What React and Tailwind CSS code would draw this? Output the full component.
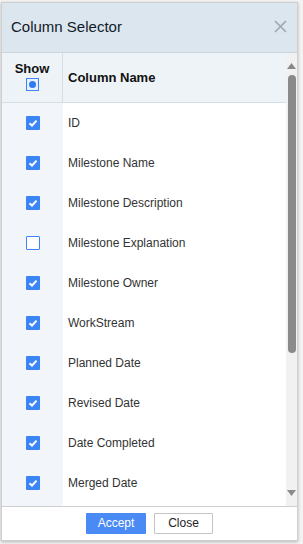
import React from "react";

const rows = [
  ["ID", true],
  ["Milestone Name", true],
  ["Milestone Description", true],
  ["Milestone Explanation", false],
  ["Milestone Owner", true],
  ["WorkStream", true],
  ["Planned Date", true],
  ["Revised Date", true],
  ["Date Completed", true],
  ["Merged Date", true],
  ["Status", true],
];

function Check({ on }) {
  if (!on)
    return <div className="w-[14px] h-[14px] border-[1.5px] border-[#3d84f6] bg-white rounded-[1px]" />;
  return (
    <div className="w-[14px] h-[14px] bg-[#3d84f6] rounded-[1px] flex items-center justify-center">
      <svg width="10" height="10" viewBox="0 0 10 10">
        <path d="M1.5 5.2 L4 7.5 L8.6 2.6" fill="none" stroke="white" strokeWidth="2" />
      </svg>
    </div>
  );
}

export default function App() {
  return (
    <div className="relative w-[303px] h-[544px] overflow-hidden bg-[#f3f3f3]" style={{ fontFamily: '"Liberation Sans", Arial, sans-serif' }}>
      <div className="absolute left-[1px] top-[2px] w-[297px] h-[539px] bg-white border border-[#cfcfcf] shadow-[0_1px_3px_rgba(0,0,0,0.25)] flex flex-col">
        <div className="h-[50px] shrink-0 bg-[#dce6ef] border-b border-[#cbd5de] flex items-center justify-between pl-[9px] pr-[10px]">
          <span className="text-[15px] text-[#111a28]">Column Selector</span>
          <svg width="13" height="13" viewBox="0 0 13 13" className="mt-[-2px]">
            <path d="M1 1 L12 12 M12 1 L1 12" stroke="#9ea6ae" strokeWidth="1.6" />
          </svg>
        </div>
        <div className="flex-1 flex min-h-0">
          <div className="flex-1 flex flex-col min-w-0 overflow-hidden">
            <div className="h-[50px] shrink-0 flex bg-[#eef3f8] border-b border-[#d5dde5]">
              <div className="w-[61px] shrink-0 border-r border-[#d5dde5] flex flex-col items-center pt-[8px]">
                <span className="text-[13px] font-bold text-[#111] leading-[15px]">Show</span>
                <div className="mt-[2px] w-[13px] h-[13px] border-[1.5px] border-[#3d84f6] bg-[#eaf1fe] flex items-center justify-center">
                  <div className="w-[7px] h-[7px] rounded-full bg-[#2f7bf5]" />
                </div>
              </div>
              <div className="flex items-center pl-[5px] text-[13px] font-bold text-[#111]">Column Name</div>
            </div>
            <div className="flex-1 overflow-hidden">
              {rows.map(([name, on]) => (
                <div key={name} className="h-[40px] flex">
                  <div className="w-[61px] shrink-0 bg-[#f2f5fa] flex items-center justify-center">
                    <Check on={on} />
                  </div>
                  <div className="flex items-center pl-[5px] text-[12px] text-[#333]">{name}</div>
                </div>
              ))}
            </div>
          </div>
          <div className="w-[11px] shrink-0 bg-[#f1f1f1] flex flex-col items-center">
            <svg width="9" height="6" viewBox="0 0 9 6" className="mt-[10px]">
              <path d="M0 6 L4.5 0 L9 6 Z" fill="#8a8a8a" />
            </svg>
            <div className="mt-[6px] w-[8px] h-[278px] rounded-[4px] bg-[#8a8a8a]" />
            <div className="flex-1" />
            <svg width="9" height="6" viewBox="0 0 9 6" className="mb-[10px]">
              <path d="M0 0 L9 0 L4.5 6 Z" fill="#8a8a8a" />
            </svg>
          </div>
        </div>
        <div className="h-[34px] shrink-0 border-t border-[#cfcfcf] flex items-center justify-center gap-[8px]">
          <div className="w-[60px] h-[21px] bg-[#4a8af4] text-white text-[12px] leading-[21px] text-center rounded-[1px]">Accept</div>
          <div className="w-[59px] h-[21px] bg-white border border-[#c4c4c4] text-[#222] text-[12px] leading-[19px] text-center rounded-[1px]">Close</div>
        </div>
      </div>
    </div>
  );
}
